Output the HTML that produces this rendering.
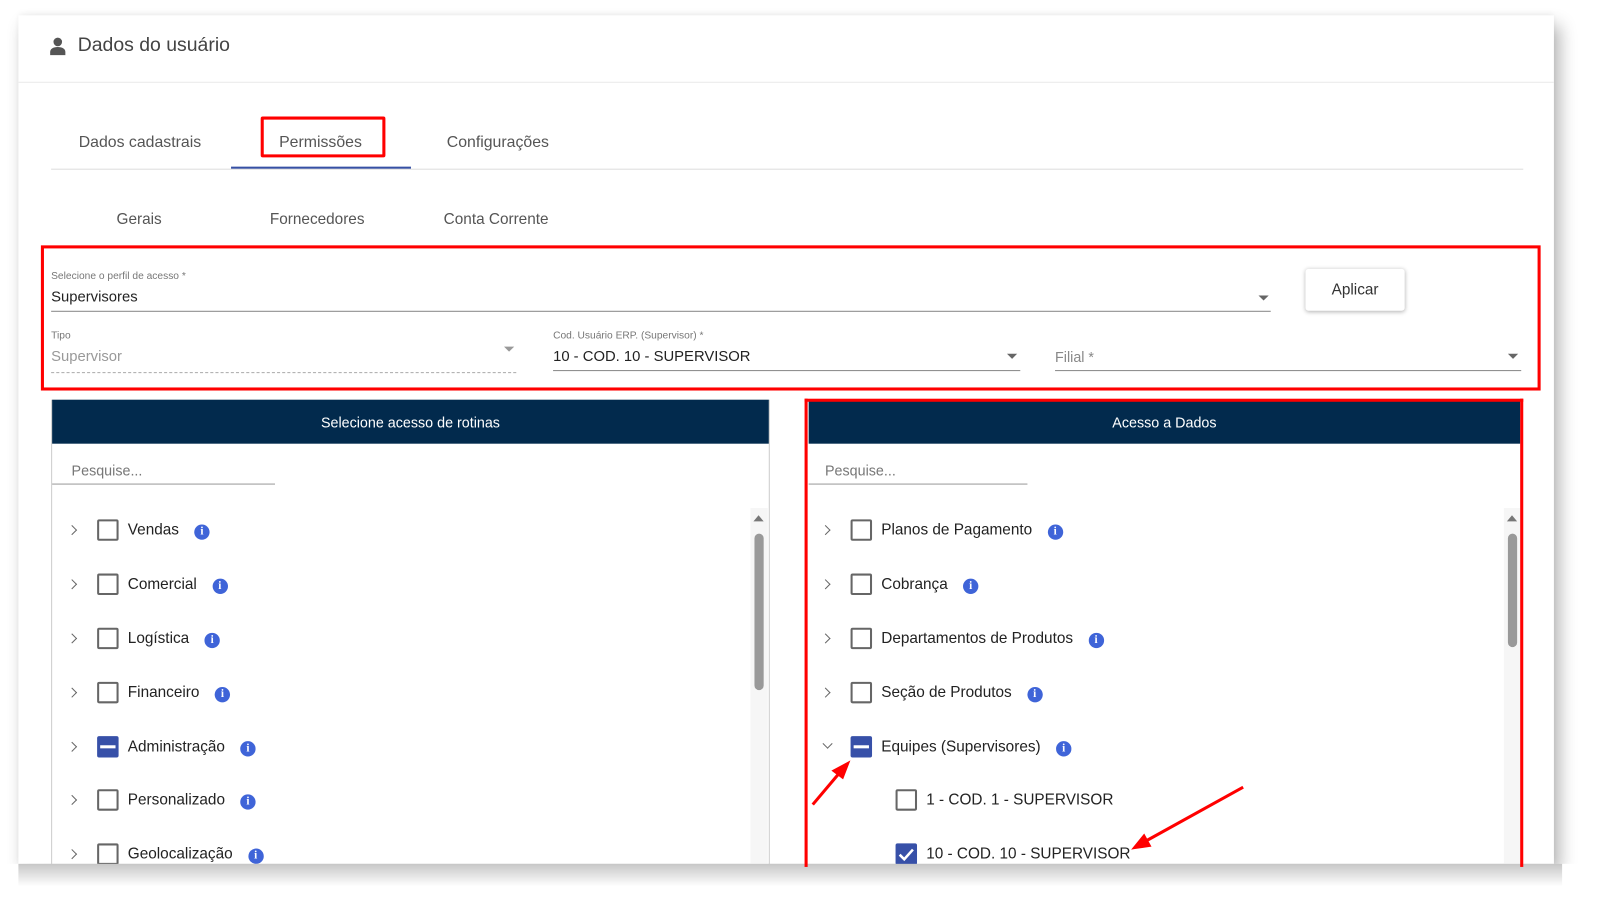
<!DOCTYPE html>
<html><head><meta charset="utf-8"><style>
*{margin:0;padding:0;box-sizing:border-box}
html,body{width:1603px;height:913px;overflow:hidden;background:#fff;font-family:"Liberation Sans",Arial,sans-serif}
#s{position:absolute;left:0;top:0;width:1568px;height:893px;transform:scale(1.02232);transform-origin:0 0}
.a{position:absolute;white-space:nowrap}
.card{position:absolute;left:18px;top:15px;width:1502px;height:830px;background:#fff;box-shadow:6px 10px 16px rgba(0,0,0,.3),0 -2px 6px rgba(0,0,0,.06)}
.red{position:absolute;border:3px solid #f00}
.lbl{font-size:10px;color:#777}
.arr{position:absolute;width:0;height:0;border-left:5px solid transparent;border-right:5px solid transparent;border-top:5px solid #666}
.ph{position:absolute;background:#022a4d;color:#fff;font-size:14px;text-align:center;line-height:45px}
.row{position:absolute;height:24px;display:flex;align-items:center;font-size:15px;color:#222}
.cb{width:21px;height:21px;border:2px solid #666;border-radius:2px;margin-right:9px;flex:none}
.cbi{width:21px;height:21px;background:#3750a8;border-radius:2px;margin-right:9px;position:relative;flex:none}
.i{width:15px;height:15px;border-radius:50%;background:#3f64d8;color:#fff;font:bold 11px "Liberation Serif",serif;text-align:center;line-height:15px;margin-left:15px;margin-top:4px;flex:none}
.chev{width:7px;height:7px;border-right:1.6px solid #666;border-top:1.6px solid #666;transform:rotate(45deg);position:absolute}
</style></head><body><div id="s">
<div class="card"></div>
<svg class="a" style="left:49px;top:36px" width="15" height="18" viewBox="0 0 15 18"><circle cx="7.5" cy="5" r="4.2" fill="#555"/><path d="M0 18v-3c0-3 3-5 7.5-5s7.5 2 7.5 5v3z" fill="#555"/></svg>
<div class="a" style="left:76px;top:34px;font-size:19px;color:#444">Dados do usuário</div>
<div class="a" style="left:18px;top:80px;width:1502px;height:1px;background:#ebebeb"></div>
<div class="a" style="left:77px;top:131px;font-size:15.5px;color:#555">Dados cadastrais</div>
<div class="a" style="left:273px;top:131px;font-size:15.5px;color:#555">Permissões</div>
<div class="a" style="left:437px;top:131px;font-size:15.5px;color:#555">Configurações</div>
<div class="a" style="left:50px;top:165px;width:1440px;height:1px;background:#ddd"></div>
<div class="a" style="left:226px;top:163px;width:176px;height:2px;background:#3650a4"></div>
<div class="red" style="left:255px;top:114px;width:122px;height:40px;border-radius:2px"></div>
<div class="a" style="left:114px;top:206px;font-size:15px;color:#555">Gerais</div>
<div class="a" style="left:264px;top:206px;font-size:15px;color:#555">Fornecedores</div>
<div class="a" style="left:434px;top:206px;font-size:15px;color:#555">Conta Corrente</div>
<div class="red" style="left:40px;top:240px;width:1467px;height:142px"></div>
<div class="a lbl" style="left:50px;top:265px">Selecione o perfil de acesso *</div>
<div class="a" style="left:50px;top:283px;font-size:14.5px;color:#222">Supervisores</div>
<div class="a" style="left:50px;top:304px;width:1193px;height:1px;background:#888"></div>
<div class="arr" style="left:1231px;top:289px"></div>
<div class="a" style="left:1277px;top:263px;width:97px;height:41px;box-shadow:0 1px 4px rgba(0,0,0,.3);border-radius:3px;font-size:15px;color:#333;text-align:center;line-height:41px">Aplicar</div>
<div class="a lbl" style="left:50px;top:323px">Tipo</div>
<div class="a" style="left:50px;top:341px;font-size:14.5px;color:#999">Supervisor</div>
<div class="a" style="left:50px;top:364px;width:455px;border-top:1px dashed #aaa"></div>
<div class="arr" style="left:493px;top:339px;border-top-color:#999"></div>
<div class="a lbl" style="left:541px;top:323px">Cod. Usuário ERP. (Supervisor) *</div>
<div class="a" style="left:541px;top:341px;font-size:14.5px;color:#222">10 - COD. 10 - SUPERVISOR</div>
<div class="a" style="left:541px;top:362px;width:457px;height:1px;background:#888"></div>
<div class="arr" style="left:985px;top:346px"></div>
<div class="a" style="left:1032px;top:341px;font-size:14px;color:#888">Filial *</div>
<div class="a" style="left:1032px;top:362px;width:456px;height:1px;background:#888"></div>
<div class="arr" style="left:1475px;top:346px"></div>

<div class="a" style="left:50px;top:391px;width:703px;height:460px;border:1px solid #ccc"></div>
<div class="ph" style="left:51px;top:391px;width:701px;height:43px">Selecione acesso de rotinas</div>
<div class="a" style="left:70px;top:452px;font-size:14px;color:#777">Pesquise...</div>
<div class="a" style="left:51px;top:473px;width:218px;height:1px;background:#999"></div>
<div class="a" style="left:734px;top:497px;width:17px;height:348px;background:#f6f6f6"></div>
<div class="a" style="left:738px;top:522px;width:9px;height:153px;background:#999;border-radius:5px"></div>
<div class="a" style="left:737px;top:504px;width:0;height:0;border-left:5px solid transparent;border-right:5px solid transparent;border-bottom:6px solid #777"></div>

<div class="chev" style="left:67px;top:515px"></div><div class="row" style="left:95px;top:506px"><div class="cb"></div>Vendas<div class="i">i</div></div>
<div class="chev" style="left:67px;top:568px"></div><div class="row" style="left:95px;top:559px"><div class="cb"></div>Comercial<div class="i">i</div></div>
<div class="chev" style="left:67px;top:621px"></div><div class="row" style="left:95px;top:612px"><div class="cb"></div>Logística<div class="i">i</div></div>
<div class="chev" style="left:67px;top:674px"></div><div class="row" style="left:95px;top:665px"><div class="cb"></div>Financeiro<div class="i">i</div></div>
<div class="chev" style="left:67px;top:727px"></div><div class="row" style="left:95px;top:718px"><div class="cbi"><div style="position:absolute;left:3px;top:9px;width:15px;height:3px;background:#fff"></div></div>Administração<div class="i">i</div></div>
<div class="chev" style="left:67px;top:779px"></div><div class="row" style="left:95px;top:770px"><div class="cb"></div>Personalizado<div class="i">i</div></div>
<div class="chev" style="left:67px;top:832px"></div><div class="row" style="left:95px;top:823px"><div class="cb"></div>Geolocalização<div class="i">i</div></div>

<div class="ph" style="left:791px;top:391px;width:696px;height:43px">Acesso a Dados</div>
<div class="a" style="left:807px;top:452px;font-size:14px;color:#777">Pesquise...</div>
<div class="a" style="left:791px;top:473px;width:214px;height:1px;background:#999"></div>
<div class="a" style="left:1471px;top:497px;width:16px;height:348px;background:#f6f6f6"></div>
<div class="a" style="left:1475px;top:522px;width:9px;height:111px;background:#999;border-radius:5px"></div>
<div class="a" style="left:1474px;top:504px;width:0;height:0;border-left:5px solid transparent;border-right:5px solid transparent;border-bottom:6px solid #777"></div>

<div class="chev" style="left:804px;top:515px"></div><div class="row" style="left:832px;top:506px"><div class="cb"></div>Planos de Pagamento<div class="i">i</div></div>
<div class="chev" style="left:804px;top:568px"></div><div class="row" style="left:832px;top:559px"><div class="cb"></div>Cobrança<div class="i">i</div></div>
<div class="chev" style="left:804px;top:621px"></div><div class="row" style="left:832px;top:612px"><div class="cb"></div>Departamentos de Produtos<div class="i">i</div></div>
<div class="chev" style="left:804px;top:674px"></div><div class="row" style="left:832px;top:665px"><div class="cb"></div>Seção de Produtos<div class="i">i</div></div>
<div class="chev" style="left:806px;top:724px;transform:rotate(135deg)"></div><div class="row" style="left:832px;top:718px"><div class="cbi"><div style="position:absolute;left:3px;top:9px;width:15px;height:3px;background:#fff"></div></div>Equipes (Supervisores)<div class="i">i</div></div>
<div class="row" style="left:876px;top:770px"><div class="cb"></div>1 - COD. 1 - SUPERVISOR</div>
<div class="row" style="left:876px;top:823px"><div class="cbi"><svg width="21" height="21" style="position:absolute;left:0;top:0"><path d="M4 11l4.5 4.5L17 6" stroke="#fff" stroke-width="2.5" fill="none"/></svg></div>10 - COD. 10 - SUPERVISOR</div>
<div class="a" style="left:0;top:845px;width:1568px;height:48px;background:#fff"></div>
<div class="a" style="left:18px;top:845px;width:1510px;height:22px;background:linear-gradient(rgba(0,0,0,.22),rgba(0,0,0,0))"></div>
<div class="red" style="left:787px;top:390px;width:703px;height:458px;border-bottom:none"></div>
<svg class="a" style="left:0;top:0" width="1568" height="893"><g stroke="#f00" stroke-width="3" fill="#f00"><line x1="795" y1="787" x2="822" y2="755"/><path d="M829 747l-13 7 8 6z"/><line x1="1216" y1="770" x2="1122" y2="822"/><path d="M1110 829l14-2-5-9z"/></g></svg>
</div></body></html>
